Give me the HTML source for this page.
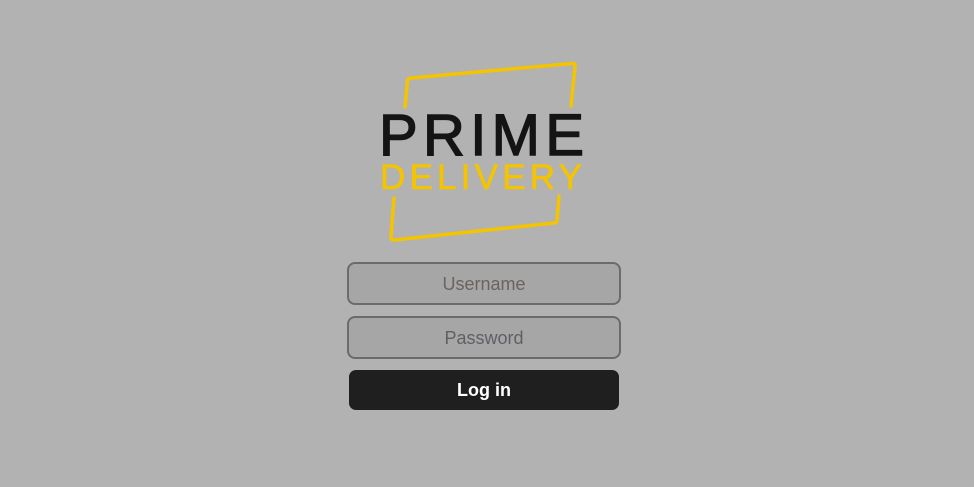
<!DOCTYPE html>
<html><head><style>
body{margin:0;width:974px;height:487px;background:#b2b2b2;font-family:"Liberation Sans",sans-serif;position:relative;overflow:hidden}
.in{position:absolute;left:347px;width:270px;height:39px;border:2px solid #6b6b6b;border-radius:8px;background:#a6a6a6;box-sizing:content-box;text-align:center;line-height:41px;font-size:18px;color:#6a6360}
.btn{position:absolute;left:349px;top:370px;width:270px;height:40px;background:#1f1f1f;border-radius:7px;color:#fff;font-weight:bold;text-align:center;line-height:41px;font-size:18px}
</style></head><body>
<svg width="974" height="487" style="position:absolute;left:0;top:0">
<g fill="none" stroke="#f5c400" stroke-width="3.5" stroke-linecap="round" stroke-linejoin="round">
<path d="M405 107 L407.5 81 Q408 78 411 78 L572 63.5 Q575.5 63 575 66 L571 106"/>
<path d="M394 198 L391 237 Q391 240 394 240 L554 223 Q557 223 557 220 L559 196"/>
</g>
<text x="379" y="155" font-family="Liberation Sans" font-size="58" fill="#141414" stroke="#141414" stroke-width="1.4" textLength="205" lengthAdjust="spacing">PRIME</text>
<text x="380" y="189" font-family="Liberation Sans" font-size="35" fill="#f5c400" stroke="#f5c400" stroke-width="0.6" textLength="202" lengthAdjust="spacing">DELIVERY</text>
</svg>
<div class="in" style="top:262px">Username</div>
<div class="in" style="top:316px;color:#5f6066">Password</div>
<div class="btn">Log in</div>
</body></html>
